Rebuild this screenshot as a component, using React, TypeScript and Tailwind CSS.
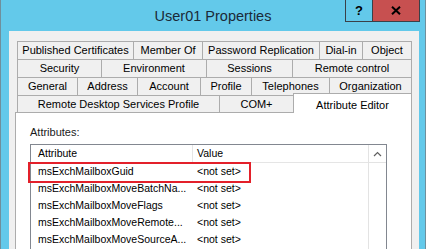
import React from "react";

type Tab = { label: string; w: number; first?: boolean };

const rows: Tab[][] = [
  [
    { label: "Published Certificates", w: 117, first: true },
    { label: "Member Of", w: 69 },
    { label: "Password Replication", w: 117 },
    { label: "Dial-in", w: 43 },
    { label: "Object", w: 49 },
  ],
  [
    { label: "Security", w: 85, first: true },
    { label: "Environment", w: 105 },
    { label: "Sessions", w: 86 },
    { label: "Remote control", w: 119 },
  ],
  [
    { label: "General", w: 61, first: true },
    { label: "Address", w: 60 },
    { label: "Account", w: 63 },
    { label: "Profile", w: 51 },
    { label: "Telephones", w: 78 },
    { label: "Organization", w: 82 },
  ],
];

const attrs = [
  "msExchMailboxGuid",
  "msExchMailboxMoveBatchNa...",
  "msExchMailboxMoveFlags",
  "msExchMailboxMoveRemote...",
  "msExchMailboxMoveSourceA...",
];

export default function App() {
  return (
    <div
      className="w-[429px] h-[249px] bg-white overflow-hidden flex"
      style={{ fontFamily: '"Liberation Sans", Arial, sans-serif' }}
    >
      <div className="w-[426px] h-full bg-[#63c9ea] border-l border-r border-[#6f8f9c] flex flex-col">
        {/* Title bar */}
        <div className="h-[31px] grid grid-cols-[1fr_auto_1fr] shrink-0">
          <div />
          <div className="self-center text-[14.5px] text-[#1b2a38] leading-none pt-[1px]">
            User01 Properties
          </div>
          <div className="justify-self-end self-start mr-[5px] flex border border-t-0 border-[#3a4048]">
            <div className="w-[27px] h-[21px] flex items-center justify-center border-r border-[#3a4048] text-[13px] font-bold text-black">
              ?
            </div>
            <div className="w-[46px] h-[21px] bg-[#c75050] flex items-center justify-center">
              <svg width="10" height="9" viewBox="0 0 10 9">
                <path d="M1 0.8 L9 8.2 M9 0.8 L1 8.2" stroke="#000" strokeWidth="2" />
              </svg>
            </div>
          </div>
        </div>

        {/* Content */}
        <div className="flex-1 ml-[8px] mr-[6px] bg-[#f0f0f0] pt-[10px] pl-[6px] flex flex-col min-h-0">
          <div className="ml-[2px] w-[395px] flex flex-col text-[11px] text-black">
            {rows.map((row, i) => (
              <div key={i} className="flex h-[18px]">
                {row.map((t) => (
                  <div
                    key={t.label}
                    style={{ width: t.w }}
                    className={`h-[18px] bg-[#f0f0f0] border-t border-r border-[#acacac] flex items-center justify-center whitespace-nowrap ${
                      t.first ? "border-l" : ""
                    }`}
                  >
                    {t.label}
                  </div>
                ))}
              </div>
            ))}
            <div className="flex h-[17px] items-start">
              <div className="w-[203px] h-[17px] border-t border-r border-l border-[#acacac] flex items-center justify-center whitespace-nowrap">
                Remote Desktop Services Profile
              </div>
              <div className="w-[74px] h-[17px] border-t border-r border-[#acacac] flex items-center justify-center">
                COM+
              </div>
              <div className="relative z-10 w-[119px] h-[20px] -ml-px -mt-[2px] -mb-px bg-white border-t border-l border-r border-[#acacac] flex items-start justify-center pt-[3px]">
                Attribute Editor
              </div>
            </div>
          </div>

          {/* Tab page */}
          <div className="w-[397px] flex-1 bg-white border border-b-0 border-[#acacac] pl-[14px] flex flex-col">
            <div className="mt-[13px] text-[11px] leading-[13px] text-[#1a1a1a]">Attributes:</div>
            <div className="mt-[5px] w-[357px] flex-1 border border-b-0 border-[#828790] flex text-[10.5px] text-black">
              <div className="flex-1 flex flex-col">
                <div className="h-[18px] flex border-b border-[#e5e5e5]">
                  <div className="w-[162px] border-r border-[#e5e5e5] pl-[7px] flex items-center">
                    Attribute
                  </div>
                  <div className="pl-[4px] flex items-center">Value</div>
                </div>
                <div className="relative flex flex-col">
                  {attrs.map((a) => (
                    <div key={a} className="h-[17px] flex items-center">
                      <div className="w-[162px] pl-[7px] whitespace-nowrap">{a}</div>
                      <div className="pl-[4px] whitespace-nowrap">&lt;not set&gt;</div>
                    </div>
                  ))}
                  <div className="absolute left-[-3px] top-[-1px] w-[223px] h-[21px] border-2 border-[#e3202a]" />
                </div>
              </div>
              <div className="w-[18px] border-l border-[#e3e3e3] flex flex-col">
                <div className="h-[18px] border-b border-[#e3e3e3] flex items-center justify-center">
                  <svg width="9" height="6" viewBox="0 0 9 6">
                    <path d="M1 5 L4.5 1.5 L8 5" stroke="#606060" strokeWidth="1.2" fill="none" />
                  </svg>
                </div>
              </div>
            </div>
          </div>
        </div>
      </div>
    </div>
  );
}
